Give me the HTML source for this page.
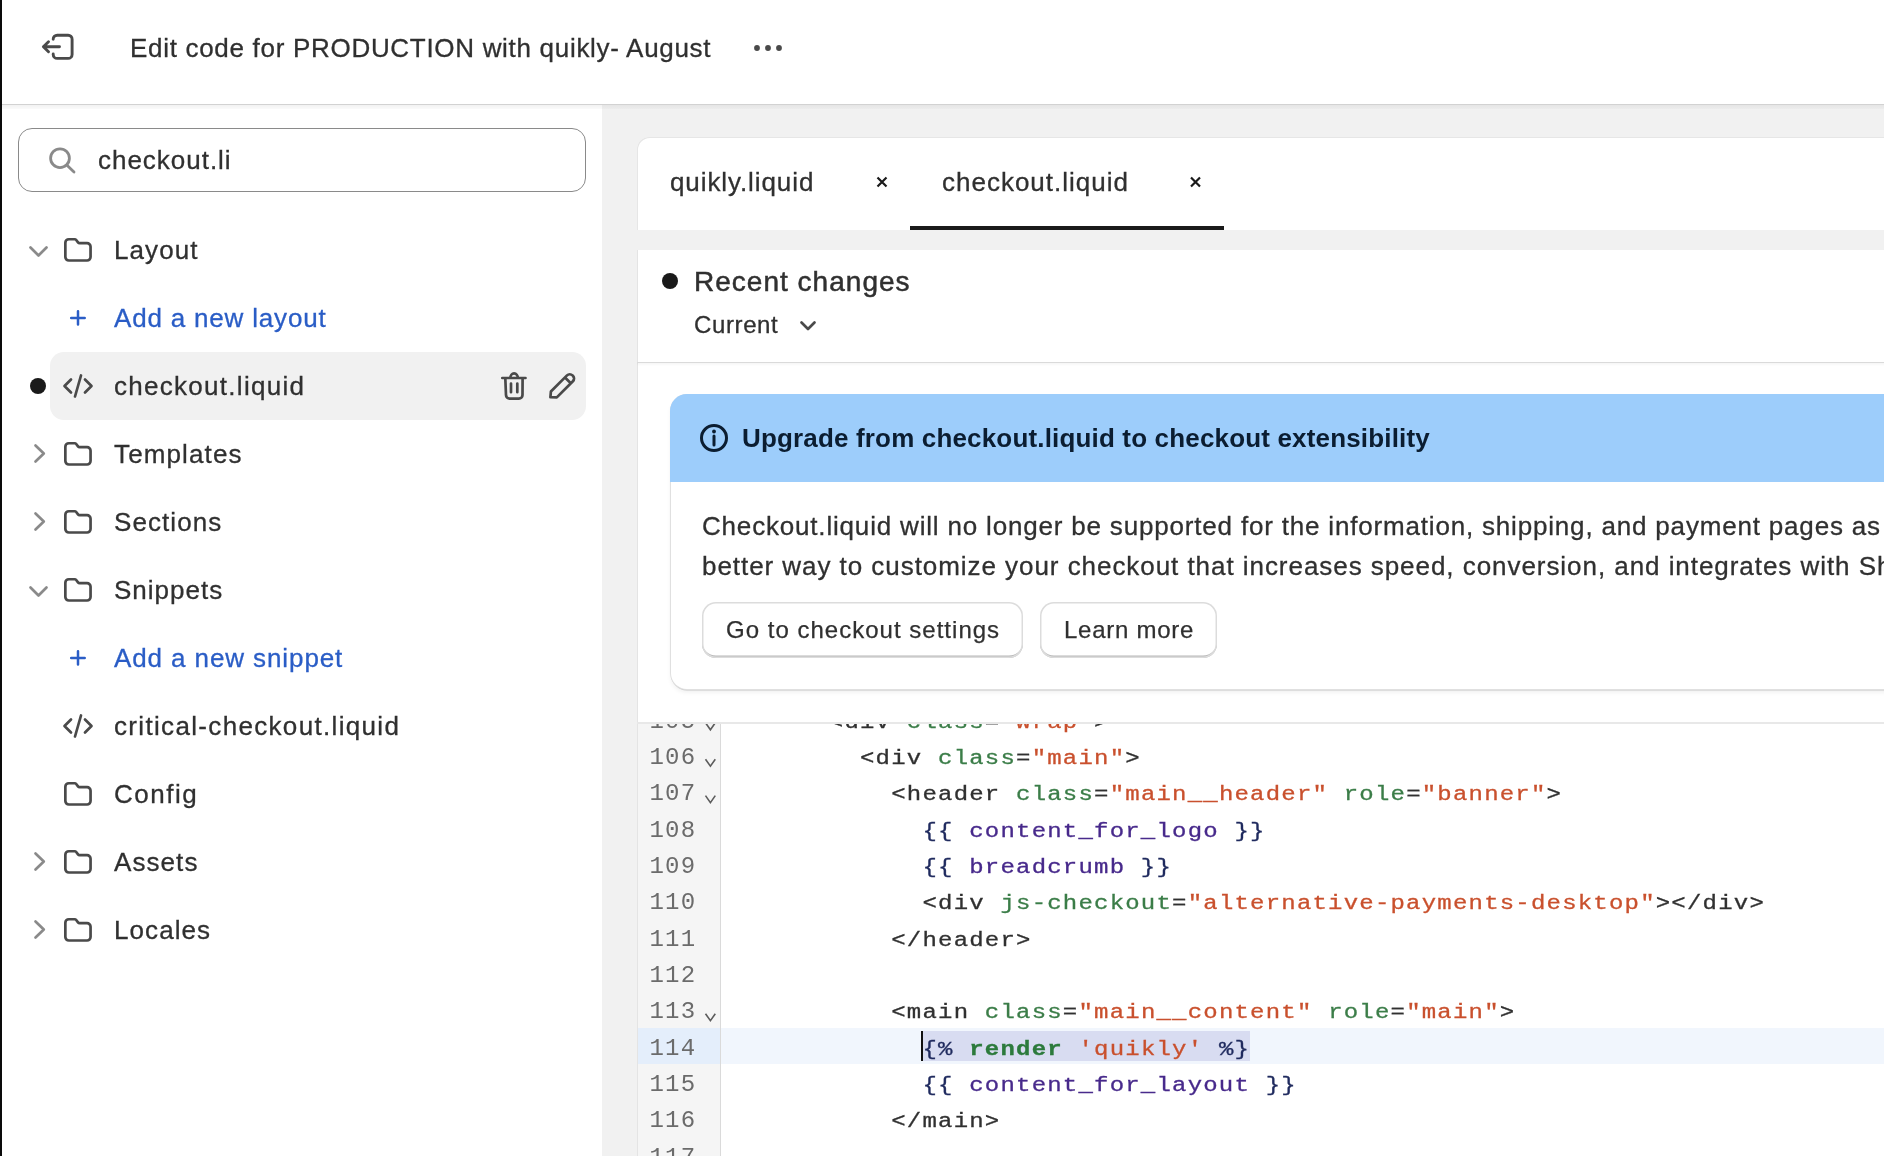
<!DOCTYPE html>
<html><head><meta charset="utf-8">
<style>
*{margin:0;padding:0;box-sizing:border-box}
html,body{width:1884px;height:1156px;overflow:hidden;background:#fff;font-family:"Liberation Sans",sans-serif;color:#303030}
body{will-change:transform}
.a{position:absolute}
.t{position:absolute;white-space:nowrap;line-height:26px;height:26px;font-size:26px;letter-spacing:0.65px;-webkit-text-stroke:0.3px currentColor}
.blue{color:#2a5dc6}
svg.ov{position:absolute;left:0;top:0;overflow:visible}
.ic{fill:none;stroke:#4a4a4a;stroke-width:2.7;stroke-linecap:round;stroke-linejoin:round}
.chev{fill:none;stroke:#8a8a8a;stroke-width:2.7;stroke-linecap:round;stroke-linejoin:round}
.m{position:absolute;white-space:pre;font-family:"Liberation Mono",monospace;font-size:25px;letter-spacing:0.6px;line-height:36.4px;height:36.4px}
.tg{color:#303030}.at{color:#3b7d48}.st{color:#c9502d}.lb{color:#1f2a5e}.lv{color:#47298b}.kw{color:#2c7a3c;font-weight:bold}
</style></head>
<body>

<div class="a" style="left:2px;top:0;width:1882px;height:104px;background:#fff"></div>
<div class="a" style="left:2px;top:104px;width:600px;height:1052px;background:#fff"></div>
<div class="a" style="left:602px;top:104px;width:1282px;height:1052px;background:#f1f1f1"></div>
<div class="a" style="left:2px;top:104px;width:1882px;height:1px;background:#d2d2d2"></div>
<div class="a" style="left:2px;top:105px;width:1882px;height:3.5px;background:linear-gradient(rgba(0,0,0,0.05),rgba(0,0,0,0.02))"></div>
<div class="a" style="left:0;top:0;width:2px;height:1156px;background:#0a0a0a"></div>
<div class="t" style="left:130px;top:35px;letter-spacing:0.698px">Edit code for PRODUCTION with quikly- August</div>
<div class="a" style="left:18px;top:128px;width:568px;height:64px;border:1.5px solid #8a8a8a;border-radius:14px;background:#fff"></div>
<div class="t" style="left:98px;top:147px;letter-spacing:0.98px">checkout.li</div>
<div class="a" style="left:50px;top:352px;width:536px;height:68px;border-radius:14px;background:#f1f1f1"></div>
<div class="t" style="left:114px;top:237px;letter-spacing:1.1px">Layout</div>
<div class="t blue" style="left:114px;top:305px;letter-spacing:0.813px">Add a new layout</div>
<div class="t" style="left:114px;top:373px;letter-spacing:1.286px">checkout.liquid</div>
<div class="t" style="left:114px;top:441px;letter-spacing:1.125px">Templates</div>
<div class="t" style="left:114px;top:509px;letter-spacing:1.086px">Sections</div>
<div class="t" style="left:114px;top:577px;letter-spacing:1.0px">Snippets</div>
<div class="t blue" style="left:114px;top:645px;letter-spacing:0.9px">Add a new snippet</div>
<div class="t" style="left:114px;top:713px;letter-spacing:1.33px">critical-checkout.liquid</div>
<div class="t" style="left:114px;top:781px;letter-spacing:1.5px">Config</div>
<div class="t" style="left:114px;top:849px;letter-spacing:1.08px">Assets</div>
<div class="t" style="left:114px;top:917px;letter-spacing:1.083px">Locales</div>
<div class="a" style="left:637px;top:137px;width:1300px;height:93px;background:#fff;border-radius:12px 0 0 0;box-shadow:inset 1px 1px 0 #e6e6e6"></div>
<div class="t" style="left:670px;top:169px;letter-spacing:0.908px">quikly.liquid</div>
<div class="t" style="left:942px;top:169px;letter-spacing:0.993px">checkout.liquid</div>
<div class="a" style="left:910px;top:226px;width:314px;height:4px;background:#1a1a1a"></div>
<div class="a" style="left:637px;top:250px;width:1300px;height:906px;background:#fff;box-shadow:inset 1px 0 0 #e4e4e4"></div>
<div class="a" style="left:637px;top:361.5px;width:1300px;height:1.2px;background:#dadada"></div>
<div class="a" style="left:637px;top:362.5px;width:1300px;height:3px;background:linear-gradient(rgba(0,0,0,0.04),rgba(0,0,0,0))"></div>
<div class="t" style="left:694px;top:267.5px;font-size:28px;line-height:28px;-webkit-text-stroke:0.5px #303030;letter-spacing:1.015px">Recent changes</div>
<div class="t" style="left:694px;top:313px;font-size:24px;line-height:24px;letter-spacing:0.617px">Current</div>
<div class="a" style="left:671px;top:395px;width:1300px;height:293.5px;background:#fff;border-radius:16px 0 0 16px;box-shadow:0 0 0 1px #e0e0e0, 0 1.5px 0 #c8c8c8, 0 3px 5px rgba(0,0,0,0.07)"></div>
<div class="a" style="left:670px;top:394px;width:1300px;height:88px;background:#9dcdfb;border-radius:17px 0 0 0"></div>
<div class="t" style="left:742px;top:425px;font-weight:bold;color:#0b1d31;-webkit-text-stroke:0;letter-spacing:0.164px">Upgrade from checkout.liquid to checkout extensibility</div>
<div class="t" style="left:702px;top:513px;letter-spacing:0.816px">Checkout.liquid will no longer be supported for the information, shipping, and payment pages as</div>
<div class="t" style="left:702px;top:553px;letter-spacing:0.948px">better way to customize your checkout that increases speed, conversion, and integrates with Shopify</div>
<div class="a" style="left:702px;top:602px;width:321px;height:56px;border-radius:14px;background:#fff;box-shadow:0 0 0 1.5px #dcdcdc inset, 0 -2.5px 0 #b8b8b8 inset"></div>
<div class="t" style="left:726px;top:617.5px;font-size:24px;line-height:24px;-webkit-text-stroke:0.25px #303030;letter-spacing:1.014px">Go to checkout settings</div>
<div class="a" style="left:1040px;top:602px;width:177px;height:56px;border-radius:14px;background:#fff;box-shadow:0 0 0 1.5px #dcdcdc inset, 0 -2.5px 0 #b8b8b8 inset"></div>
<div class="t" style="left:1064px;top:617.5px;font-size:24px;line-height:24px;-webkit-text-stroke:0.25px #303030;letter-spacing:0.744px">Learn more</div>
<div class="a" style="left:637px;top:722px;width:1300px;height:434px;background:#fff;overflow:hidden" id="ed">
<div class="a" style="left:0;top:0;width:1300px;height:1.5px;background:#e8e8e8;z-index:5"></div>
<div class="a" style="left:0;top:0;width:84px;height:434px;background:#f5f5f5;border-right:1.5px solid #dadada;box-shadow:inset 1px 0 0 #e4e4e4"></div>
<div class="m" style="left:12.5px;top:-18.5px;color:#6b6b6b;font-size:24px;letter-spacing:1.2px">105</div>
<div class="m" style="left:98.2px;top:-18.5px;font-size:24px;letter-spacing:1.2px;-webkit-text-stroke:0.35px currentColor;transform:scaleY(0.88);transform-origin:0 25.5px">      <span class="tg">&lt;div </span><span class="at">class</span><span class="tg">=</span><span class="st">"wrap"</span><span class="tg">&gt;</span></div>
<div class="m" style="left:12.5px;top:17.8px;color:#6b6b6b;font-size:24px;letter-spacing:1.2px">106</div>
<div class="m" style="left:98.2px;top:17.8px;font-size:24px;letter-spacing:1.2px;-webkit-text-stroke:0.35px currentColor;transform:scaleY(0.88);transform-origin:0 25.5px">        <span class="tg">&lt;div </span><span class="at">class</span><span class="tg">=</span><span class="st">"main"</span><span class="tg">&gt;</span></div>
<div class="m" style="left:12.5px;top:54.2px;color:#6b6b6b;font-size:24px;letter-spacing:1.2px">107</div>
<div class="m" style="left:98.2px;top:54.2px;font-size:24px;letter-spacing:1.2px;-webkit-text-stroke:0.35px currentColor;transform:scaleY(0.88);transform-origin:0 25.5px">          <span class="tg">&lt;header </span><span class="at">class</span><span class="tg">=</span><span class="st">"main__header"</span><span class="tg"> </span><span class="at">role</span><span class="tg">=</span><span class="st">"banner"</span><span class="tg">&gt;</span></div>
<div class="m" style="left:12.5px;top:90.5px;color:#6b6b6b;font-size:24px;letter-spacing:1.2px">108</div>
<div class="m" style="left:98.2px;top:90.5px;font-size:24px;letter-spacing:1.2px;-webkit-text-stroke:0.35px currentColor;transform:scaleY(0.88);transform-origin:0 25.5px">            <span class="lb">{{ </span><span class="lv">content_for_logo</span><span class="lb"> }}</span></div>
<div class="m" style="left:12.5px;top:126.9px;color:#6b6b6b;font-size:24px;letter-spacing:1.2px">109</div>
<div class="m" style="left:98.2px;top:126.9px;font-size:24px;letter-spacing:1.2px;-webkit-text-stroke:0.35px currentColor;transform:scaleY(0.88);transform-origin:0 25.5px">            <span class="lb">{{ </span><span class="lv">breadcrumb</span><span class="lb"> }}</span></div>
<div class="m" style="left:12.5px;top:163.3px;color:#6b6b6b;font-size:24px;letter-spacing:1.2px">110</div>
<div class="m" style="left:98.2px;top:163.3px;font-size:24px;letter-spacing:1.2px;-webkit-text-stroke:0.35px currentColor;transform:scaleY(0.88);transform-origin:0 25.5px">            <span class="tg">&lt;div </span><span class="at">js-checkout</span><span class="tg">=</span><span class="st">"alternative-payments-desktop"</span><span class="tg">&gt;&lt;/div&gt;</span></div>
<div class="m" style="left:12.5px;top:199.6px;color:#6b6b6b;font-size:24px;letter-spacing:1.2px">111</div>
<div class="m" style="left:98.2px;top:199.6px;font-size:24px;letter-spacing:1.2px;-webkit-text-stroke:0.35px currentColor;transform:scaleY(0.88);transform-origin:0 25.5px">          <span class="tg">&lt;/header&gt;</span></div>
<div class="m" style="left:12.5px;top:236.0px;color:#6b6b6b;font-size:24px;letter-spacing:1.2px">112</div>
<div class="m" style="left:98.2px;top:236.0px;font-size:24px;letter-spacing:1.2px;-webkit-text-stroke:0.35px currentColor;transform:scaleY(0.88);transform-origin:0 25.5px"></div>
<div class="m" style="left:12.5px;top:272.3px;color:#6b6b6b;font-size:24px;letter-spacing:1.2px">113</div>
<div class="m" style="left:98.2px;top:272.3px;font-size:24px;letter-spacing:1.2px;-webkit-text-stroke:0.35px currentColor;transform:scaleY(0.88);transform-origin:0 25.5px">          <span class="tg">&lt;main </span><span class="at">class</span><span class="tg">=</span><span class="st">"main__content"</span><span class="tg"> </span><span class="at">role</span><span class="tg">=</span><span class="st">"main"</span><span class="tg">&gt;</span></div>
<div class="a" style="left:84px;top:305.7px;width:1300px;height:36.2px;background:#f1f6fd"></div>
<div class="a" style="left:1px;top:305.7px;width:81.5px;height:36.2px;background:#e4eefb"></div>
<div class="a" style="left:285.5px;top:308.7px;width:327.6px;height:30px;background:#d8dcf1"></div>
<div class="a" style="left:284.0px;top:308.7px;width:2px;height:30px;background:#111"></div>
<div class="m" style="left:12.5px;top:308.7px;color:#6b6b6b;font-size:24px;letter-spacing:1.2px">114</div>
<div class="m" style="left:98.2px;top:308.7px;font-size:24px;letter-spacing:1.2px;-webkit-text-stroke:0.35px currentColor;transform:scaleY(0.88);transform-origin:0 25.5px">            <span class="lb">{% </span><span class="kw">render</span><span class="tg"> </span><span class="st">'quikly'</span><span class="lb"> %}</span></div>
<div class="m" style="left:12.5px;top:345.1px;color:#6b6b6b;font-size:24px;letter-spacing:1.2px">115</div>
<div class="m" style="left:98.2px;top:345.1px;font-size:24px;letter-spacing:1.2px;-webkit-text-stroke:0.35px currentColor;transform:scaleY(0.88);transform-origin:0 25.5px">            <span class="lb">{{ </span><span class="lv">content_for_layout</span><span class="lb"> }}</span></div>
<div class="m" style="left:12.5px;top:381.4px;color:#6b6b6b;font-size:24px;letter-spacing:1.2px">116</div>
<div class="m" style="left:98.2px;top:381.4px;font-size:24px;letter-spacing:1.2px;-webkit-text-stroke:0.35px currentColor;transform:scaleY(0.88);transform-origin:0 25.5px">          <span class="tg">&lt;/main&gt;</span></div>
<div class="m" style="left:12.5px;top:417.8px;color:#6b6b6b;font-size:24px;letter-spacing:1.2px">117</div>
<div class="m" style="left:98.2px;top:417.8px;font-size:24px;letter-spacing:1.2px;-webkit-text-stroke:0.35px currentColor;transform:scaleY(0.88);transform-origin:0 25.5px"></div>
<svg class="ov" width="1300" height="434"><path d="M68.5 0.8 L73.4 7.8 L78.3 0.8" fill="none" stroke="#5c5c5c" stroke-width="1.6"/><path d="M68.5 37.2 L73.4 44.2 L78.3 37.2" fill="none" stroke="#5c5c5c" stroke-width="1.6"/><path d="M68.5 73.6 L73.4 80.6 L78.3 73.6" fill="none" stroke="#5c5c5c" stroke-width="1.6"/><path d="M68.5 291.7 L73.4 298.7 L78.3 291.7" fill="none" stroke="#5c5c5c" stroke-width="1.6"/></svg>
</div>
<svg class="ov" width="1884" height="1156"><path class="chev" d="M30.5 247.5 L38.5 255.5 L46.5 247.5"/>
<path class="ic" transform="translate(0 250)" d="M65.35 -7.25 a3.5 3.5 0 0 1 3.5 -3.5 H74.6 a2 2 0 0 1 1.6 0.8 L78 -7.6 a2 2 0 0 0 1.6 0.8 H87.05 a3.5 3.5 0 0 1 3.5 3.5 V7 a3.5 3.5 0 0 1 -3.5 3.5 H68.85 a3.5 3.5 0 0 1 -3.5 -3.5 Z"/>
<path class="ic" style="stroke:#2a5dc6;stroke-width:2.5" transform="translate(0 318)" d="M71.2 0 H84.7 M78 -6.7 V6.5"/>
<path class="ic" transform="translate(0 386)" d="M71 -6.5 L64.5 0 L71 6.5 M85 -6.5 L91.5 0 L85 6.5 M81 -10.5 L75 10.5"/>
<path class="chev" d="M35.5 445.5 L43.8 453.5 L35.5 461.5"/>
<path class="ic" transform="translate(0 454)" d="M65.35 -7.25 a3.5 3.5 0 0 1 3.5 -3.5 H74.6 a2 2 0 0 1 1.6 0.8 L78 -7.6 a2 2 0 0 0 1.6 0.8 H87.05 a3.5 3.5 0 0 1 3.5 3.5 V7 a3.5 3.5 0 0 1 -3.5 3.5 H68.85 a3.5 3.5 0 0 1 -3.5 -3.5 Z"/>
<path class="chev" d="M35.5 513.5 L43.8 521.5 L35.5 529.5"/>
<path class="ic" transform="translate(0 522)" d="M65.35 -7.25 a3.5 3.5 0 0 1 3.5 -3.5 H74.6 a2 2 0 0 1 1.6 0.8 L78 -7.6 a2 2 0 0 0 1.6 0.8 H87.05 a3.5 3.5 0 0 1 3.5 3.5 V7 a3.5 3.5 0 0 1 -3.5 3.5 H68.85 a3.5 3.5 0 0 1 -3.5 -3.5 Z"/>
<path class="chev" d="M30.5 587.5 L38.5 595.5 L46.5 587.5"/>
<path class="ic" transform="translate(0 590)" d="M65.35 -7.25 a3.5 3.5 0 0 1 3.5 -3.5 H74.6 a2 2 0 0 1 1.6 0.8 L78 -7.6 a2 2 0 0 0 1.6 0.8 H87.05 a3.5 3.5 0 0 1 3.5 3.5 V7 a3.5 3.5 0 0 1 -3.5 3.5 H68.85 a3.5 3.5 0 0 1 -3.5 -3.5 Z"/>
<path class="ic" style="stroke:#2a5dc6;stroke-width:2.5" transform="translate(0 658)" d="M71.2 0 H84.7 M78 -6.7 V6.5"/>
<path class="ic" transform="translate(0 726)" d="M71 -6.5 L64.5 0 L71 6.5 M85 -6.5 L91.5 0 L85 6.5 M81 -10.5 L75 10.5"/>
<path class="ic" transform="translate(0 794)" d="M65.35 -7.25 a3.5 3.5 0 0 1 3.5 -3.5 H74.6 a2 2 0 0 1 1.6 0.8 L78 -7.6 a2 2 0 0 0 1.6 0.8 H87.05 a3.5 3.5 0 0 1 3.5 3.5 V7 a3.5 3.5 0 0 1 -3.5 3.5 H68.85 a3.5 3.5 0 0 1 -3.5 -3.5 Z"/>
<path class="chev" d="M35.5 853.5 L43.8 861.5 L35.5 869.5"/>
<path class="ic" transform="translate(0 862)" d="M65.35 -7.25 a3.5 3.5 0 0 1 3.5 -3.5 H74.6 a2 2 0 0 1 1.6 0.8 L78 -7.6 a2 2 0 0 0 1.6 0.8 H87.05 a3.5 3.5 0 0 1 3.5 3.5 V7 a3.5 3.5 0 0 1 -3.5 3.5 H68.85 a3.5 3.5 0 0 1 -3.5 -3.5 Z"/>
<path class="chev" d="M35.5 921.5 L43.8 929.5 L35.5 937.5"/>
<path class="ic" transform="translate(0 930)" d="M65.35 -7.25 a3.5 3.5 0 0 1 3.5 -3.5 H74.6 a2 2 0 0 1 1.6 0.8 L78 -7.6 a2 2 0 0 0 1.6 0.8 H87.05 a3.5 3.5 0 0 1 3.5 3.5 V7 a3.5 3.5 0 0 1 -3.5 3.5 H68.85 a3.5 3.5 0 0 1 -3.5 -3.5 Z"/>
<circle cx="38" cy="386" r="8" fill="#1a1a1a"/>
<path class="ic" d="M502.3 378 H525.5 M510.3 378 a3.8 4.6 0 0 1 7.6 0 M505.3 378 L506 395 a3.6 3.6 0 0 0 3.6 3.6 H518.9 a3.6 3.6 0 0 0 3.6 -3.6 L522.6 378 M511 383.6 V392.2 M517.3 383.6 V392.2"/>
<path class="ic" d="M550.4 397.2 L550.9 391.5 L567 375.4 a3.9 3.9 0 0 1 5.5 0 L572.9 375.8 a3.9 3.9 0 0 1 0 5.5 L556.8 397.4 Z M565 377.5 L570.8 383.3"/>
<path class="ic" style="stroke-width:2.9" d="M53.2 39 V39.2 a4 4 0 0 1 4 -4 H68.1 a4 4 0 0 1 4 4 V54.4 a4 4 0 0 1 -4 4 H57.2 a4 4 0 0 1 -4 -4 V54"/>
<path class="ic" style="stroke-width:2.9" d="M43.5 46.8 H59.5 M48.5 41.8 L43.4 46.8 L48.5 51.8"/>
<circle cx="757" cy="48" r="2.9" fill="#4a4a4a"/>
<circle cx="768" cy="48" r="2.9" fill="#4a4a4a"/>
<circle cx="779" cy="48" r="2.9" fill="#4a4a4a"/>
<circle cx="60" cy="158.2" r="9.4" fill="none" stroke="#8a8a8a" stroke-width="2.8"/>
<path d="M67 165.2 L74 172" stroke="#8a8a8a" stroke-width="2.8" stroke-linecap="round"/>
<path d="M877.5 177.5 L886.5 186.5 M886.5 177.5 L877.5 186.5" stroke="#1a1a1a" stroke-width="2.2"/>
<path d="M1191 177.5 L1200 186.5 M1200 177.5 L1191 186.5" stroke="#1a1a1a" stroke-width="2.2"/>
<circle cx="670" cy="281" r="8" fill="#1a1a1a"/>
<path class="ic" d="M801.5 322.5 L808 329 L814.5 322.5"/>
<circle cx="714" cy="438" r="12.5" fill="none" stroke="#0b1d31" stroke-width="3"/>
<circle cx="714" cy="431.5" r="1.9" fill="#0b1d31"/>
<path d="M714 436 V445" stroke="#0b1d31" stroke-width="3" stroke-linecap="round"/></svg>
</body></html>
